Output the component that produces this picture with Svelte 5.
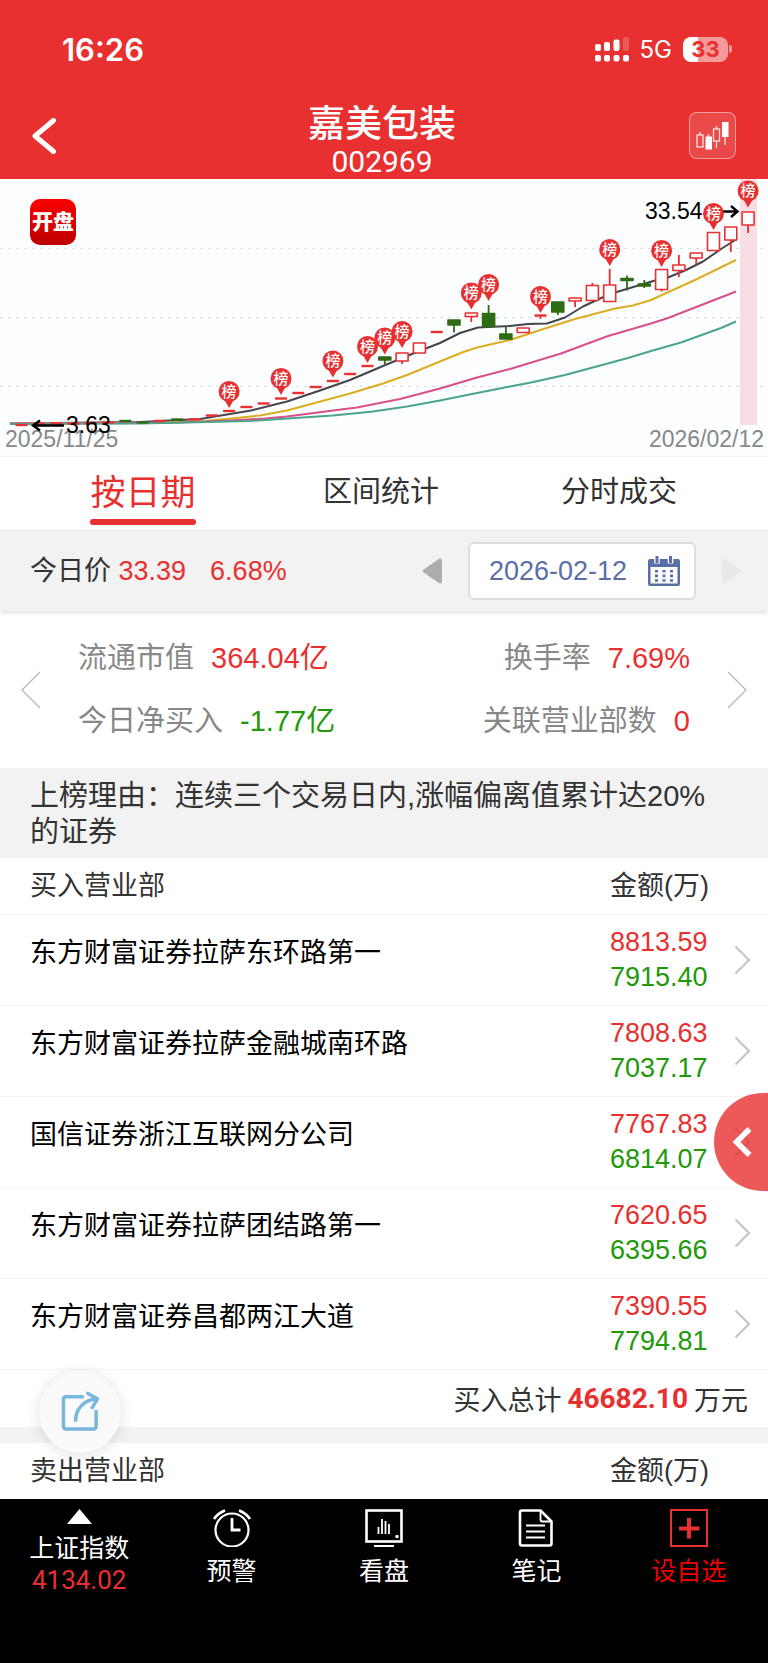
<script lang="ts">
  type Candle = { c: 'r' | 'g'; top: number; bottom: number; high?: number; low?: number };

  let activeTab = $state('date');
  let date = $state('2026-02-12');

  const tabs = [
    { id: 'date', label: '按日期' },
    { id: 'range', label: '区间统计' },
    { id: 'tick', label: '分时成交' }
  ];

  const buyers = [
    { name: '东方财富证券拉萨东环路第一', buy: '8813.59', sell: '7915.40' },
    { name: '东方财富证券拉萨金融城南环路', buy: '7808.63', sell: '7037.17' },
    { name: '国信证券浙江互联网分公司', buy: '7767.83', sell: '6814.07' },
    { name: '东方财富证券拉萨团结路第一', buy: '7620.65', sell: '6395.66' },
    { name: '东方财富证券昌都两江大道', buy: '7390.55', sell: '7794.81' }
  ];

  // limit-up days have no body, only a dash
  const dash = (y: number, c: 'r' | 'g' = 'r'): Candle => ({ c, top: y, bottom: y });

  const candles: Candle[] = [
    dash(246), dash(245), dash(244.5), dash(244.5), dash(244), dash(243.5),
    dash(242, 'g'), dash(243.5, 'g'), dash(242), dash(240.5, 'g'), dash(240.5),
    dash(236.5), dash(232), dash(228), dash(224.5), dash(219.5), dash(214),
    dash(208), dash(202), dash(195), dash(187),
    { c: 'g', top: 178, bottom: 181, low: 185 },
    { c: 'r', top: 174, bottom: 182, low: 185 },
    { c: 'r', top: 164, bottom: 174 },
    dash(153),
    { c: 'g', top: 141, bottom: 146, low: 153.5 },
    { c: 'r', top: 134, bottom: 137.5, low: 143 },
    { c: 'g', top: 134.5, bottom: 147.5, high: 126 },
    { c: 'g', top: 155, bottom: 160, high: 147 },
    { c: 'r', top: 149, bottom: 153.5 },
    { ...dash(136.5), low: 140 },
    { c: 'g', top: 123, bottom: 133, low: 136 },
    { c: 'r', top: 119, bottom: 122, low: 128 },
    { c: 'r', top: 106.5, bottom: 121.5, high: 104 },
    { c: 'r', top: 106, bottom: 122.5, high: 90 },
    { c: 'g', top: 99.5, bottom: 101.5, high: 96.5, low: 111.5 },
    { c: 'g', top: 105, bottom: 107, high: 101, low: 109 },
    { c: 'r', top: 90.5, bottom: 110.5, low: 112.5 },
    { c: 'r', top: 86, bottom: 91.5, high: 76, low: 98 },
    { c: 'r', top: 74, bottom: 79, low: 85.5 },
    { c: 'r', top: 53.5, bottom: 71.5 },
    { c: 'r', top: 48, bottom: 61, low: 73 },
    { c: 'r', top: 33, bottom: 46, low: 54 }
  ];

  // [candle index, y of the pin centre]
  const pins = [
    [12, 212.5], [15, 199.5], [18, 182], [20, 167.5], [21, 159], [22, 152.5],
    [26, 114], [27, 105.5], [30, 117.5], [34, 70.5], [37, 71.5], [40, 34.5], [42, 12]
  ];

  const averages = [
    { color: '#45464b', d: '10,244.5 140,243 200,240 251,231.5 287,222.5 320,211.5 350,201 383,187 418,172.5 440,164 460,154 478,148.5 488,148 510,147 528,145 547,144.5 565,138.5 583,127.5 600,119.5 615,113.5 655,101.5 668,98.5 686,91 703,82.5 721,70 736,60.5' },
    { color: '#dbae20', d: '10,244.5 150,244 200,242.5 260,236.5 287,231.5 313,224.5 350,214.5 383,204.5 407,196 440,182.5 462,173.5 477,168.5 510,161 545,149.5 575,140 615,129.5 633,126.5 651,121 695,101 736,81' },
    { color: '#d94f8c', d: '10,244.5 180,243.5 230,241.5 265,239.5 287,237.5 333,231.5 357,228.5 400,220 440,209.5 477,198.5 510,190 561,174.5 608,157 651,144.5 668,139 695,128.5 736,112.5' },
    { color: '#4aa58b', d: '10,245 140,244.5 250,242 333,236.5 373,232.5 407,227.5 440,221.5 477,214 510,207.5 531,203.5 565,196 628,179 651,172 681,163.5 721,149 736,142.5' }
  ];

  const cx = (i: number) => 21.5 + i * 17.3;
  const paint = (c: string) => (c === 'r' ? '#e83030' : '#2f6b14');
</script>

<div class="page">
  <header class="top">
    <div class="status">
      <span class="time">16:26</span>
      <span class="status-right">
        <svg class="signal" viewBox="0 0 34 25" aria-hidden="true">
          <g fill="#fff">
            <rect x="0" y="7" width="6" height="7" rx="2" />
            <rect x="9" y="5" width="6" height="9" rx="2" />
            <rect x="18.5" y="2.5" width="6" height="11.5" rx="2" />
            <rect x="28" y="0" width="6" height="14" rx="2" opacity=".2" />
            <rect x="0" y="18" width="6" height="6.5" rx="2" />
            <rect x="9" y="18" width="6" height="6.5" rx="2" />
            <rect x="18.5" y="18" width="6" height="6.5" rx="2" />
            <rect x="28" y="18" width="6" height="6.5" rx="2" />
          </g>
        </svg>
        <span class="net">5G</span>
        <span class="battery"><span class="cell">33</span><i></i></span>
      </span>
    </div>
    <div class="nav">
      <button class="back" aria-label="返回">
        <svg viewBox="0 0 24 36"><path d="M21.500 2.500L3 18l18.500 15.500" fill="none" stroke="#fff" stroke-width="5" stroke-linecap="round" stroke-linejoin="round" /></svg>
      </button>
      <div class="heading">
        <h1>嘉美包装</h1>
        <p>002969</p>
      </div>
      <button class="kline" aria-label="K线">
        <svg viewBox="0 0 47 47">
          <g fill="none" stroke="#ffe0e0" stroke-width="1.300">
            <rect x="8" y="23" width="6" height="12" />
            <path d="M11 20v3M19.500 22v3M27.500 14v3M27.500 29v7M36 25v8" />
            <rect x="24.500" y="17" width="6" height="12" />
          </g>
          <rect x="16.500" y="24.500" width="6.500" height="13" fill="#fff" />
          <rect x="33" y="10" width="6.500" height="15" fill="#fff" />
        </svg>
      </button>
    </div>
  </header>

  <section class="chart">
    <svg viewBox="0 0 768 277" role="img" aria-label="日K线">
      <g stroke="#dddde4" stroke-dasharray="3 5">
        <path d="M0 69.500H768M0 138.500H768M0 207.500H768" />
      </g>
      <rect x="740" y="0" width="17" height="246" fill="#f7dde4" />
      <text class="day" x="5" y="268">2025/11/25</text>
      <text class="day" x="764" y="268" text-anchor="end">2026/02/12</text>

      {#each averages as line}
        <polyline points={line.d} fill="none" stroke={line.color} stroke-width="2" stroke-linejoin="round" />
      {/each}

      {#each candles as k, i}
        {#if k.high}
          <path d="M{cx(i)} {k.high}V{k.top}" stroke={paint(k.c)} stroke-width="1.8" />
        {/if}
        {#if k.low}
          <path d="M{cx(i)} {k.bottom}V{k.low}" stroke={paint(k.c)} stroke-width="1.8" />
        {/if}
        {#if k.top === k.bottom}
          <path d="M{cx(i) - 6} {k.top}h12" stroke={paint(k.c)} stroke-width="2.4" />
        {:else}
          <rect
            x={cx(i) - 6}
            y={k.top}
            width="12"
            height={k.bottom - k.top}
            fill={k.c === 'g' ? paint(k.c) : '#fcfdff'}
            stroke={paint(k.c)}
            stroke-width="1.6"
            stroke-linejoin="round"
          />
        {/if}
      {/each}

      <g fill="none" stroke="#000" stroke-width="2.4">
        <path d="M64 246.500H33M40 241.500L33 246.500l7 5" />
        <path d="M722 32.500H737M731 27l6.500 5.500L731 38" />
      </g>
      <text class="mark" x="66" y="254">3.63</text>
      <text class="mark" x="645" y="40">33.54</text>

      {#each pins as [i, y]}
        <path d="M{cx(i)} {y + 16.5}l-4 -7h8z" fill="#e83030" />
        <circle cx={cx(i)} cy={y} r="10.5" fill="#e83030" />
        <text class="pin" x={cx(i)} y={y + 5}>榜</text>
      {/each}
    </svg>
    <div class="logo">开盘</div>
  </section>

  <nav class="tabs">
    {#each tabs as tab}
      <button class:active={activeTab === tab.id} onclick={() => (activeTab = tab.id)}>{tab.label}</button>
    {/each}
  </nav>

  <section class="price-bar">
    <p>今日价 <b>33.39</b><b class="pct">6.68%</b></p>
    <div class="picker">
      <button class="step" aria-label="前一日">
        <svg viewBox="0 0 20 26"><path d="M1 12L17.500.500Q20 0 20 2.500V23.500Q20 26 17.500 25.500L1 14Q0 13 1 12z" fill="#adadad" /></svg>
      </button>
      <div class="date-box">
        <input type="text" aria-label="日期" bind:value={date} />
        <button aria-label="选择日期">
          <svg viewBox="0 0 32 30">
            <path d="M2 3H30Q32 3 32 5V28Q32 30 30 30H2Q0 30 0 28V5Q0 3 2 3z" fill="#5a6fa8" />
            <rect x="2.500" y="11" width="27" height="16.500" fill="#fff" />
            <path d="M9 0V7.500M22.500 0V7.500" stroke="#fff" stroke-width="5.500" />
            <path d="M9 0V7M22.500 0V7" stroke="#5a6fa8" stroke-width="3" />
            <path d="M8.500 14V26M16 14V26M23.500 14V26" stroke="#5a6fa8" stroke-width="3" stroke-dasharray="2.600 2" />
          </svg>
        </button>
      </div>
      <button class="step" aria-label="后一日" disabled>
        <svg viewBox="0 0 20 26"><path d="M19 12L2.500.500Q0 0 0 2.500V23.500Q0 26 2.500 25.500L19 14Q20 13 19 12z" fill="#e9e9e9" /></svg>
      </button>
    </div>
  </section>

  <section class="stats">
    <button aria-label="上一页">
      <svg viewBox="0 0 20 38"><path d="M19 1L1 19l18 18" fill="none" stroke="#b5b5b5" stroke-width="1.200" /></svg>
    </button>
    <div class="col">
      <p>流通市值 <b>364.04亿</b></p>
      <p>今日净买入 <b class="green">-1.77亿</b></p>
    </div>
    <div class="col right">
      <p>换手率 <b>7.69%</b></p>
      <p>关联营业部数 <b>0</b></p>
    </div>
    <button aria-label="下一页">
      <svg viewBox="0 0 20 38"><path d="M1 1l18 18L1 37" fill="none" stroke="#b5b5b5" stroke-width="1.200" /></svg>
    </button>
  </section>

  <p class="reason">上榜理由：连续三个交易日内,涨幅偏离值累计达20%的证券</p>

  <section class="buy">
    <table>
      <thead>
        <tr><th>买入营业部</th><th class="money" colspan="2">金额(万)</th></tr>
      </thead>
      <tbody>
        {#each buyers as row}
          <tr>
            <td class="name">{row.name}</td>
            <td class="money"><span class="red">{row.buy}</span><span class="green">{row.sell}</span></td>
            <td class="go">
              <svg viewBox="0 0 17 30"><path d="M1.500 1.500L15 15 1.500 28.500" fill="none" stroke="#c8c8c8" stroke-width="2.400" /></svg>
            </td>
          </tr>
        {/each}
      </tbody>
    </table>
    <p class="total">买入总计<strong>46682.10</strong>万元</p>

    <button class="drawer" aria-label="展开">
      <svg viewBox="0 0 20 32"><path d="M17.500 3L4.500 16l13 13" fill="none" stroke="#fff" stroke-width="5.500" /></svg>
    </button>
    <button class="share" aria-label="分享">
      <svg viewBox="0 0 40 42">
        <g fill="none" stroke="#79b7dc" stroke-width="3.600" stroke-linecap="round" stroke-linejoin="round">
          <path d="M22 6H5Q2.500 6 2.500 8.500V36Q2.500 39 5 39H33.500Q36 39 36 36V21" />
          <path d="M15 30C15 19 23 9 37 8M27.500 2.500L37.500 8 32 17" />
        </g>
      </svg>
    </button>
  </section>

  <section class="sell">
    <table>
      <thead>
        <tr><th>卖出营业部</th><th class="money">金额(万)</th></tr>
      </thead>
    </table>
  </section>

  <footer class="bar">
    <button class="index">
      <svg viewBox="0 0 25 15"><path d="M12.500 0L25 15H0z" fill="#fff" /></svg>
      <span>上证指数</span>
      <span class="point">4134.02</span>
    </button>
    <button>
      <svg viewBox="0 0 38 38">
        <g fill="none" stroke="#fff" stroke-width="2.200">
          <circle cx="19" cy="21" r="16.500" />
          <path d="M19 9V21H27.500" stroke-width="2.800" />
          <path d="M1 10Q5 4 12 1.500M37 10Q33 4 26 1.500" stroke-width="2.800" />
        </g>
      </svg>
      <span>预警</span>
    </button>
    <button>
      <svg viewBox="0 0 38 38">
        <g fill="none" stroke="#fff">
          <rect x="1.500" y="1.500" width="35" height="31" stroke-width="2.600" />
          <path d="M9 37H29" stroke-width="2" />
          <path d="M13.500 18V25M17 10V25M20.500 12V25M24 15V25" stroke-width="1.800" />
        </g>
        <circle cx="32" cy="27.500" r="1.700" fill="#fff" />
      </svg>
      <span>看盘</span>
    </button>
    <button>
      <svg viewBox="0 0 38 38">
        <g fill="none" stroke="#fff" stroke-width="2.600" stroke-linejoin="round">
          <path d="M23.500 1.500H5Q3 1.500 3 3.500V34.500Q3 36.500 5 36.500H32.500Q34.500 36.500 34.500 34.500V12.500z" />
          <path d="M23.500 1.500V10.500Q23.500 12.500 25.500 12.500H34.500" stroke-width="1.800" />
          <path d="M9 16.500H28M9 22.500H28M9 28.500H28" stroke-width="2" />
        </g>
      </svg>
      <span>笔记</span>
    </button>
    <button class="add">
      <svg viewBox="0 0 38 38">
        <rect x="1" y="1" width="36" height="36" fill="none" stroke="#e83030" stroke-width="2" />
        <path d="M19 9V29.500M9 19.500H29.500" stroke="#e83030" stroke-width="4" />
      </svg>
      <span>设自选</span>
    </button>
  </footer>
</div>

<style>
  :global(body) {
    margin: 0;
    background: #fff;
  }

  .page {
    --red: #e83030;
    --green: #21990a;
    --gray: #f2f2f2;
    --line: #f3f3f3;
    font-family: "Liberation Sans", "Noto Sans CJK SC", sans-serif;
    font-size: 27px;
    color: #333;
    padding-bottom: 1px;
  }

  * { box-sizing: border-box; }
  p, h1 { margin: 0; }
  b { font-weight: 400; color: var(--red); }
  svg { display: block; }

  button {
    border: 0;
    padding: 0;
    background: none;
    color: inherit;
    font: inherit;
    cursor: pointer;
  }

  .red { color: var(--red); }
  .green { color: var(--green); }

  /* header */
  .top {
    background: var(--red);
    color: #fff;
  }
  .status {
    height: 98px;
    padding: 0 36px 0 62px;
    display: flex;
    align-items: center;
    justify-content: space-between;
    font-family: Inter, sans-serif;
  }
  .time {
    font-size: 31px;
    font-weight: 600;
  }
  .status-right {
    display: flex;
    align-items: center;
    gap: 11px;
  }
  .signal { width: 34px; }
  .net { font-size: 24px; }
  .battery {
    display: flex;
    align-items: center;
    gap: 1px;
  }
  .cell {
    width: 45px;
    height: 25px;
    border-radius: 8px;
    background: linear-gradient(90deg, #fff 33%, #f59a9a 33%);
    color: var(--red);
    font-size: 22px;
    font-weight: 700;
    line-height: 25px;
    text-align: center;
  }
  .battery i {
    width: 3px;
    height: 8px;
    border-radius: 0 4px 4px 0;
    background: #f59a9a;
  }
  .nav {
    height: 81px;
    padding: 0 32px;
    display: flex;
    justify-content: space-between;
  }
  .back {
    width: 43px;
    height: 76px;
  }
  .back svg { width: 24px; }
  .heading {
    padding-top: 3px;
    text-align: center;
  }
  .heading h1 {
    font-size: 37px;
    font-weight: 500;
    line-height: 48px;
  }
  .heading p {
    font-family: Roboto, sans-serif;
    font-size: 30px;
    line-height: 26px;
  }
  .kline {
    width: 47px;
    height: 47px;
    margin-top: 14px;
    border-radius: 8px;
    background: rgba(255, 255, 255, 0.12);
    box-shadow: inset 0 0 0 1px rgba(255, 255, 255, 0.45);
  }

  /* chart */
  .chart {
    position: relative;
    background: #fcfdff;
    border-bottom: 1px solid #f1f2f6;
  }
  .chart > svg { width: 100%; }
  .mark { font-size: 23px; fill: #000; }
  .day { font-size: 23px; fill: #888; }
  .pin {
    font-size: 15px;
    font-weight: 500;
    fill: #fff;
    text-anchor: middle;
  }
  .logo {
    position: absolute;
    top: 20px;
    left: 30px;
    width: 46px;
    height: 46px;
    border-radius: 10px;
    background: linear-gradient(#fb0000, #bd0000);
    color: #fff;
    font-size: 21px;
    font-weight: 900;
    line-height: 46px;
    text-align: center;
  }

  /* tabs */
  .tabs {
    height: 74px;
    padding: 0 30px 0 24px;
    display: grid;
    grid-template-columns: repeat(3, 1fr);
    justify-items: center;
    align-items: start;
    border-bottom: 1px solid #e8e8e8;
  }
  .tabs button {
    height: 68px;
    padding-top: 2px;
    font-size: 29px;
    border-bottom: 6px solid transparent;
  }
  .tabs .active {
    position: relative;
    font-size: 35px;
    color: var(--red);
  }
  .tabs .active::after {
    content: "";
    position: absolute;
    inset: auto 0 -6px;
    height: 6px;
    border-radius: 3px;
    background: var(--red);
  }

  /* price */
  .price-bar {
    height: 80px;
    padding: 0 26px 0 30px;
    display: flex;
    align-items: center;
    justify-content: space-between;
    background: var(--gray);
    box-shadow: 0 2px 4px rgba(0, 0, 0, 0.12);
  }
  .price-bar p { line-height: 40px; }
  .pct { margin-left: 24px; }
  .picker {
    display: flex;
    align-items: center;
    gap: 26px;
  }
  .step svg { width: 20px; }
  .date-box {
    width: 228px;
    height: 58px;
    padding: 0 14px 0 19px;
    display: flex;
    align-items: center;
    justify-content: space-between;
    border: 2px solid #ddd;
    border-radius: 6px;
    background: #fff;
  }
  .date-box input {
    width: 148px;
    padding: 0;
    border: 0;
    outline: 0;
    background: none;
    font: inherit;
    color: #5a6fa8;
  }
  .date-box svg { width: 32px; }

  /* stats */
  .stats {
    padding: 16px 21px 15px;
    display: flex;
    align-items: center;
    font-size: 29px;
    line-height: 63px;
    color: #888;
  }
  .stats svg { width: 20px; }
  .stats b { margin-left: 9px; }
  .stats b.green { color: var(--green); }
  .col {
    flex: 1;
    padding-left: 37px;
    white-space: nowrap;
  }
  .col.right {
    padding: 0 37px 0 0;
    text-align: right;
  }

  .reason {
    padding: 10px 42px 8px 30px;
    background: var(--gray);
    font-size: 29px;
    line-height: 36px;
  }

  /* lists */
  .buy { position: relative; }
  table {
    width: 100%;
    border-collapse: collapse;
    table-layout: fixed;
  }
  th {
    height: 56px;
    padding: 1px 0 0 30px;
    font-weight: 400;
    line-height: 40px;
    text-align: left;
  }
  th.money {
    width: 158px;
    padding: 1px 0 0;
  }
  .buy tr { border-bottom: 1px solid var(--line); }
  td {
    height: 91px;
    padding: 0;
  }
  .name {
    padding: 18px 0 0 30px;
    vertical-align: top;
    line-height: 40px;
    color: #000;
  }
  .money span {
    display: block;
    line-height: 35px;
  }
  .go { padding-left: 45px; }
  .go svg { width: 17px; }

  .total {
    height: 57px;
    padding-right: 20px;
    display: flex;
    align-items: center;
    justify-content: flex-end;
  }
  .total strong {
    margin: 0 6px;
    font-family: Roboto, sans-serif;
    font-size: 28px;
    color: var(--red);
  }
  .drawer {
    position: absolute;
    top: 235px;
    right: 0;
    width: 54px;
    height: 98px;
    padding-left: 18px;
    border-radius: 49px 0 0 49px;
    background: rgba(232, 48, 48, 0.8);
  }
  .drawer svg { width: 20px; }
  .share {
    position: absolute;
    bottom: -26px;
    left: 39px;
    width: 82px;
    height: 82px;
    padding-left: 22px;
    border-radius: 50%;
    background: #fafafa;
    box-shadow: 0 2px 14px rgba(0, 0, 0, 0.12);
  }
  .share svg { width: 39px; }

  .sell { border-top: 16px solid var(--gray); }

  /* bottom bar */
  .bar {
    height: 164px;
    padding: 10px 3px 0;
    display: grid;
    grid-template-columns: repeat(5, 1fr);
    align-items: start;
    background: #000;
    color: #fff;
    font-size: 25px;
  }
  .bar button {
    display: flex;
    flex-direction: column;
    align-items: center;
    gap: 8px;
    line-height: 32px;
  }
  .bar svg { width: 38px; }
  .bar .index { gap: 0; }
  .bar .index svg {
    width: 25px;
    margin-bottom: 8px;
  }
  .bar .point {
    color: var(--red);
    font-family: Roboto, sans-serif;
    font-size: 26px;
  }
  .bar .add { color: #f00000; }
</style>
